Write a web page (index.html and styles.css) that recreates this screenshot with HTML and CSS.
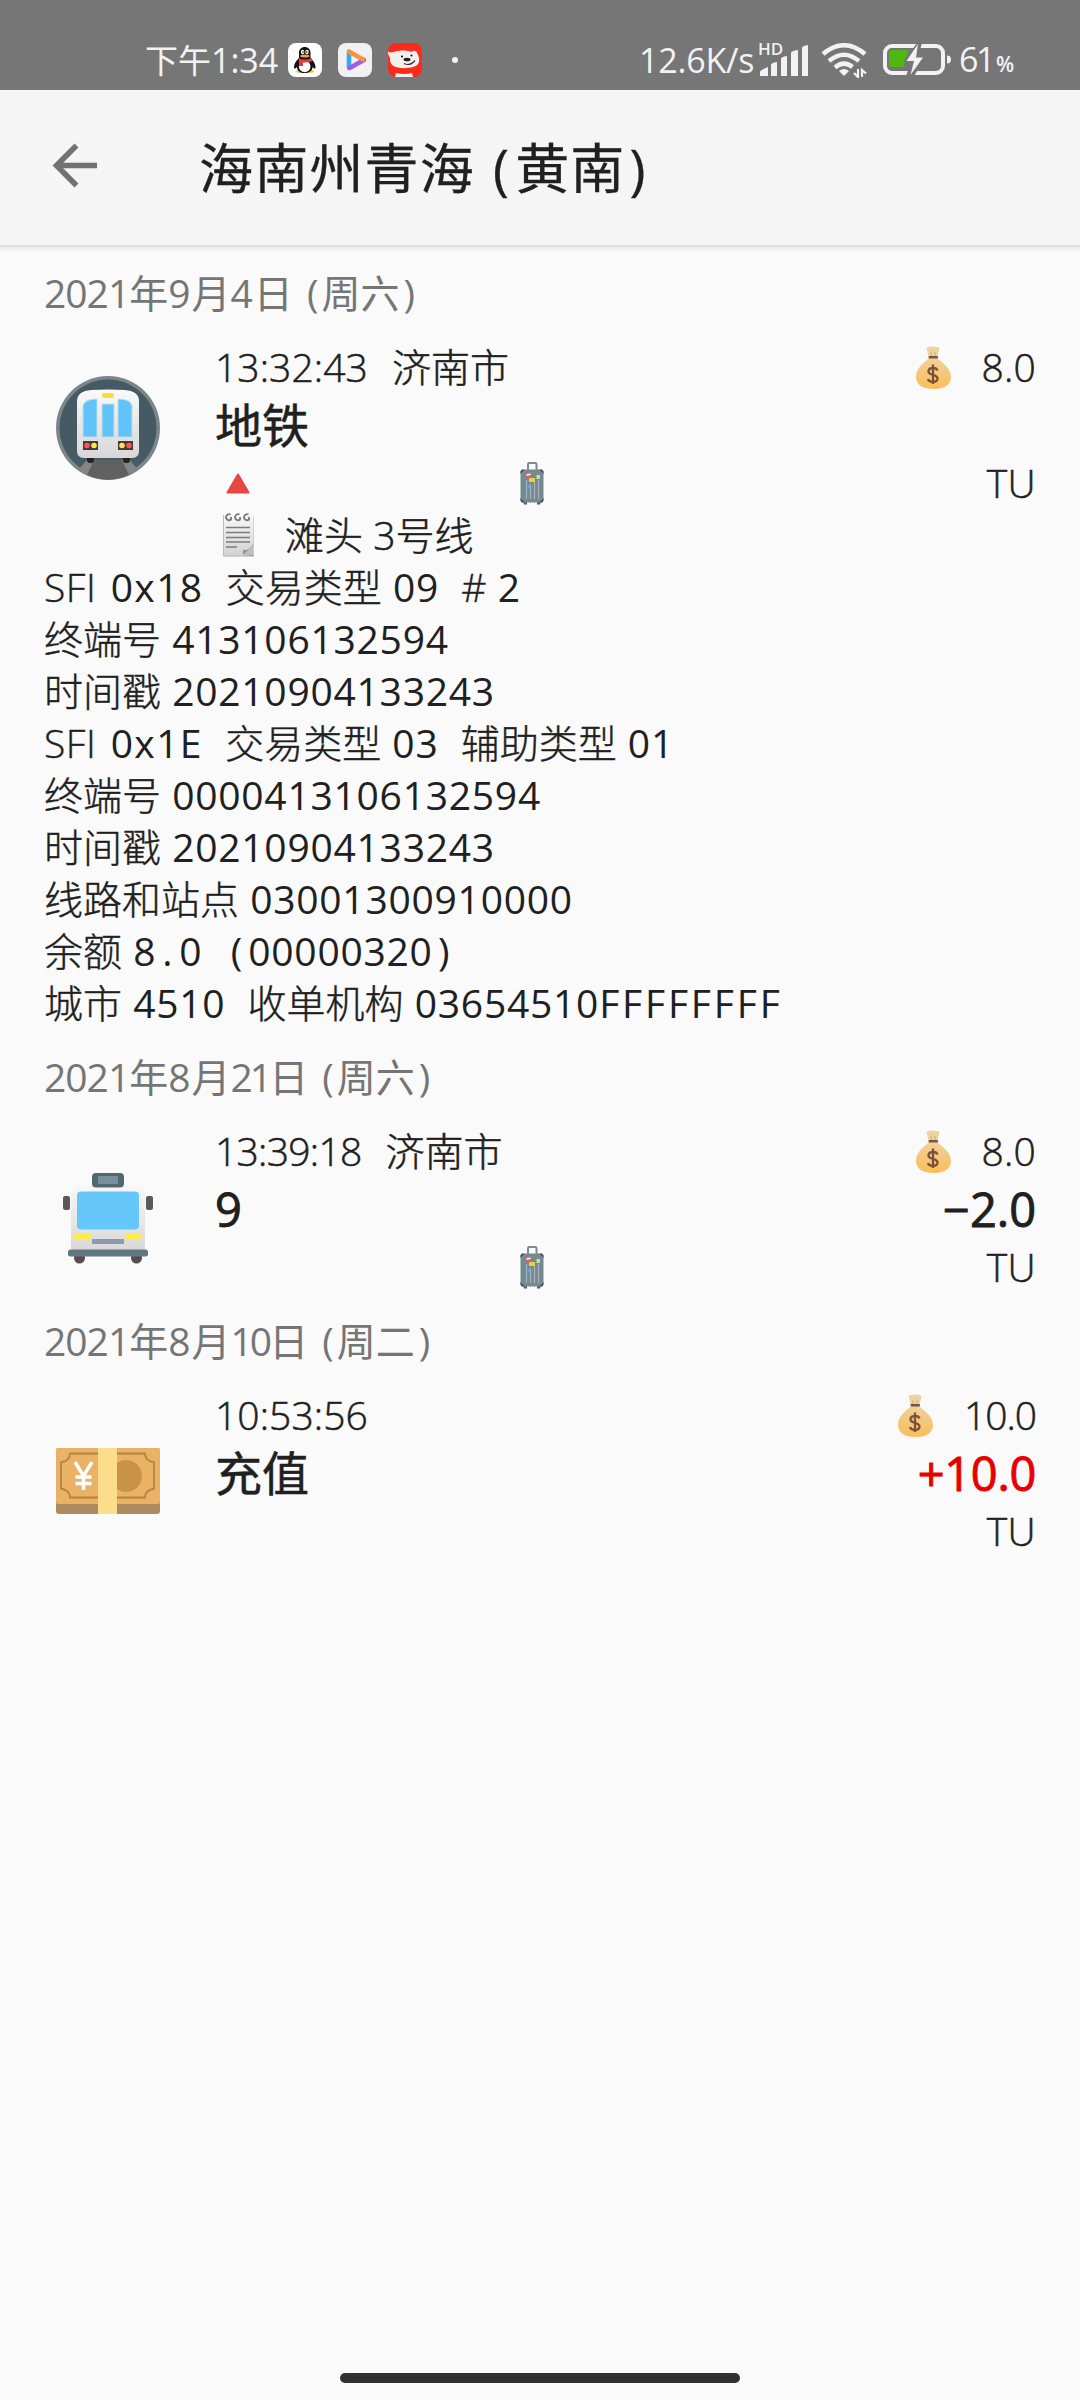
FILE: index.html
```html
<!DOCTYPE html>
<html lang="zh-CN">
<head>
<meta charset="utf-8">
<title>海南州青海 (黄南)</title>
<link rel="stylesheet" href="styles.css">
</head>
<body>
<svg class="defs" width="0" height="0" aria-hidden="true">
  <defs>
    <linearGradient id="bagFill" x1="0" y1="0" x2="0" y2="1"><stop offset="0" stop-color="#f0d09c"/><stop offset="1" stop-color="#fbbd58"/></linearGradient>
    <linearGradient id="shell" x1="0" y1="0" x2="0" y2="1"><stop offset="0" stop-color="#fafafa"/><stop offset="1" stop-color="#d8d6d8"/></linearGradient>
    <linearGradient id="paper" x1="0" y1="0" x2="0" y2="1"><stop offset="0" stop-color="#f7f7f7"/><stop offset="1" stop-color="#d2d2d2"/></linearGradient>
    <symbol id="bag" viewBox="0 0 35 43">
      <path d="M12.5 11C12 6 10 3 11 1.500Q17 -.5 23 1.500C24 4 22 7 21.500 11Z" fill="#ecd3a4"/>
      <path d="M15 6v5M19 6v5" stroke="#cfae78" stroke-width="1"/>
      <path d="M13 12C8 17 0 22 0 31c0 8 7 12 17.500 12S35 39 35 31C35 22 26 17 21.500 12Z" fill="url(#bagFill)"/>
      <rect x="12.500" y="10" width="9.500" height="2.600" rx="1" fill="#7b5545"/>
      <path d="M21.500 24.500C20.500 21 12.500 21 12.500 25.500C12.500 30 21.500 27.500 21.500 32.500C21.500 37 13 37 12 33M17 18.500V38" fill="none" stroke="#7b5139" stroke-width="2.300"/>
    </symbol>
    <symbol id="case" viewBox="0 0 24 43">
      <path d="M8 8V2.200Q8 1 9 1h6.500q1 0 1 1.200V8" fill="none" stroke="#7d8a90" stroke-width="2"/>
      <path d="M3 39h4v3.500H4zM17 39h4l-1 3.500h-3z" fill="#546067"/>
      <rect x=".5" y="7.500" width="23" height="33" rx="3" fill="#768990"/>
      <path d="M.5 12V10q0-3 4-2.500zM23.500 12V10q0-3-4-2.500zM.5 36v2q0 3 4 2.500zM23.500 36v2q0 3-4 2.500z" fill="#465157"/>
      <path d="M6.500 18v19M10.500 22v15M14.500 20v17M18.500 18v19" stroke="#a5b4ba" stroke-width="1.200"/>
      <path d="M5 12l6-1.300 1 3.500-6 1.300z" fill="#f05b66"/><path d="M6.500 13l4-.8" stroke="#fff" stroke-width="1.400"/>
      <rect x="9" y="16" width="6" height="4" fill="#f9c83c"/><rect x="16.500" y="13" width="3.500" height="4" fill="#a5efae"/>
      <path d="M5 28l4-5 1 2-4 5z" fill="#6aa3f5"/>
    </symbol>
  </defs>
</svg>

<header class="status">
  <div class="status-side">
    <span class="clock">下午<span class="clock-num">1:34</span></span>
    <svg class="app" viewBox="0 0 34 34">
      <rect width="34" height="34" rx="8" fill="#fff"/>
      <path d="M10 27l-3 2 4 1h12l4-1-3-2z" fill="#f3c84b"/>
      <path d="M11 10C11 2 22.500 2 22.500 10v5c3 3 5 6 5 9 0 3-2 1-3 0 0 4-4 6-8 6s-7.500-2-7.500-6c-1 1-3 3-3 0 0-3 2-6 5-9z" fill="#111"/>
      <ellipse cx="16.700" cy="23.500" rx="5.800" ry="5.700" fill="#fff"/>
      <ellipse cx="14.600" cy="9" rx="1.700" ry="2.200" fill="#fff"/><ellipse cx="19" cy="9" rx="1.700" ry="2.200" fill="#fff"/>
      <circle cx="15" cy="9" r=".8" fill="#111"/><circle cx="18.700" cy="9" r=".8" fill="#111"/>
      <ellipse cx="16.800" cy="13" rx="4.600" ry="1.500" fill="#f2a33a"/>
      <path d="M10.500 15q6.500 3 13 0l1 3q-5 2-9.500 1.500V23h-4v-4z" fill="#e03d45"/>
    </svg>
    <svg class="app" viewBox="0 0 34 34">
      <rect width="34" height="34" rx="8" fill="#f1f1f3"/>
      <g fill="none" stroke-width="4.600" stroke-linejoin="round" stroke-linecap="round">
        <path d="M11 10V24.500" stroke="#37a9ec"/><path d="M11.500 25L26 17" stroke="#9c5cf0"/><path d="M11 8.500L25 16.500" stroke="#f6943c"/>
      </g>
    </svg>
    <svg class="app" viewBox="0 0 34 34">
      <rect width="34" height="34" rx="8" fill="#fb2b19"/>
      <path d="M0 8.500q3 1.500 6 .5c5-2 13-2 17.500 0 2-2 5-1.500 5.500 1 3 5 4 12-4 14-5 1.500-13 1.500-17 0C3 23 1.500 18 2 15Q0 13 0 8.500z" fill="#f5efed"/>
      <path d="M8 30q8 2 16 0l1 4H7z" fill="#f5efed"/>
      <ellipse cx="19" cy="16.500" rx="3.500" ry="1.800" fill="#202020"/><circle cx="14" cy="13.500" r="1"/><circle cx="23.500" cy="12.500" r="1"/>
      <path d="M16 20.500q6 3 11-3" fill="none" stroke="#333" stroke-width="1.200"/>
    </svg>
    <i class="more"></i>
  </div>
  <div class="status-side">
    <span class="speed">12.6K/s</span>
    <span class="signal"><span class="hd">HD</span>
      <svg width="49" height="31" viewBox="0 0 49 31" fill="#f2f2f2"><path d="M0 31v-4q0-2 8-5v9z"/><path d="M11 31V20q0-2 6-3v14z"/><path d="M21 31V14q0-2 6-3v20z"/><path d="M31 31V8q0-2 7-3v26z"/><path d="M42 31V3q0-2 6-3v31z"/></svg>
    </span>
    <svg class="wifi" width="46" height="35" viewBox="0 0 46 35" fill="none" stroke="#f2f2f2">
      <path d="M2 11Q23 -6.500 44 11" stroke-width="4.500"/><path d="M8 18Q23 5.500 38 18" stroke-width="4.500"/><path d="M14 24.500Q23 17 31.500 24" stroke-width="4.500"/>
      <path d="M18 28q5-4 10 0l-5 5z" fill="#f2f2f2" stroke="none"/>
      <path d="M37 26v8l-4-4M41 34v-7l4 3.500" stroke-width="2.200"/>
    </svg>
    <svg class="battery" width="69" height="32" viewBox="0 0 69 32">
      <rect x="2" y="2" width="58" height="27" rx="7" fill="none" stroke="#f2f2f2" stroke-width="4"/>
      <path d="M8 6h17l-2 9-3 8H8q-2 0-2-2V8q0-2 2-2z" fill="#4fb810"/>
      <path d="M34-1L20 18h8l-5 14h8L43 13h-8l4-14z" fill="#767676"/>
      <path d="M35 0L23.500 17H31l-3.500 14L40 13.500h-7z" fill="#f2f2f2"/>
      <path d="M64 11.500q4 0 4 4t-4 4z" fill="#f2f2f2"/>
    </svg>
    <span class="percent">61<small>%</small></span>
  </div>
</header>

<nav class="bar">
  <svg class="back" width="46" height="46" viewBox="0 0 46 46" fill="none" stroke="#727272" stroke-width="5.600"><path d="M45 22.500H5M24.500 2.500L4.500 22.500L24.500 42.500"/></svg>
  <h1>海南州青海<span class="open">(</span>黄南<span class="close">)</span></h1>
</nav>

<main>
  <h2><b>2021</b>年<b class="digit">9</b>月<b class="digit">4</b>日 <i>(</i>周六<i>)</i></h2>
  <section class="trip">
    <div class="icon">
      <svg class="metro" viewBox="0 0 104 104">
        <circle cx="52" cy="52" r="52" fill="#7b858a"/><circle cx="52" cy="52" r="48.500" fill="#455a64"/>
        <path d="M31 84h43l8 10a52 52 0 0 1-60 0z" fill="#858585"/><path d="M38 84h28l7 15a52 52 0 0 1-42 0z" fill="#616161"/>
        <rect x="31" y="79" width="7" height="8" rx="3" fill="#222"/><rect x="67" y="79" width="7" height="8" rx="3" fill="#222"/>
        <path d="M21 24q1-9 14-10 17-1 34 0 13 1 14 10v51q0 7-7 7H28q-7 0-7-7z" fill="url(#shell)"/>
        <path d="M27 61V30q1-7 14-7v38zM46 28h12v33H46zM62 23q13 0 14 7v31H62z" fill="#60c3fa" stroke="#c8dbe2" stroke-width="1"/>
        <rect x="46" y="17" width="12" height="5" rx="2" fill="#f8dc45"/>
        <path d="M27 65h15v9H27zM62 65h15v9H62z" fill="#403b3b"/>
        <g fill="#ff5252"><circle cx="31" cy="69.500" r="2.800"/><circle cx="73" cy="69.500" r="2.800"/></g><g fill="#ffe34d"><circle cx="38" cy="69.500" r="2.800"/><circle cx="66" cy="69.500" r="2.800"/></g>
      </svg>
    </div>
    <div class="body">
      <div class="line"><span><span class="time">13:32:43</span>济南市</span><span class="balance"><svg class="bag"><use href="#bag"/></svg>8.0</span></div>
      <div class="line title"><span>地铁</span></div>
      <div class="line route">
        <svg class="up" viewBox="0 0 24 21"><path d="M12 1.500L22.500 19.500H1.500z" fill="#e84744" stroke="#e84744" stroke-width="2" stroke-linejoin="round"/></svg>
        <svg class="case"><use href="#case"/></svg><span>TU</span></div>
      <div class="line note">
        <svg viewBox="0 0 31 44"><path d="M0 2h31v41.500H0z" fill="url(#paper)"/><path d="M.5 2v41H31V3" fill="none" stroke="#bcbcbc"/>
          <path d="M3 14.500h24M3 19.500h24M3 24.500h24M3 29h24M3 34h11" stroke="#7c7c7c" stroke-width="1.600"/>
          <path d="M20 42V37q6 1 10-6v12z" fill="#929292"/><path d="M20 42L30 32v10z" fill="#bdbdbd"/>
          <g fill="none" stroke="#777" stroke-width="1.800"><path d="M7.500 1.500A3 3 0 1 0 8 6.500L8 4M16.500 1.500A3 3 0 1 0 17 6.500L17 4M25.500 1.500A3 3 0 1 0 26 6.500L26 4"/></g></svg>
        <span>滩头 3号线</span></div>
    </div>
  </section>
  <div class="details">
    <p><span>SFI</span> <b>0x18</b>  交易类型 <b>09</b>  # <b>2</b></p>
    <p>终端号 <b>413106132594</b></p>
    <p>时间戳 <b>20210904133243</b></p>
    <p><span>SFI</span> <b>0x1E</b>  交易类型 <b>03</b>  辅助类型 <b>01</b></p>
    <p>终端号 <b>0000413106132594</b></p>
    <p>时间戳 <b>20210904133243</b></p>
    <p>线路和站点 <b>03001300910000</b></p>
    <p>余额 <b>8<i>.</i>0<i> </i><i>(</i>00000320<i>)</i></b></p>
    <p>城市 <b>4510</b>  收单机构 <b>03654510<em>FFFFFFFF</em></b></p>
  </div>

  <h2><b>2021</b>年<b class="digit">8</b>月<b class="pair">21</b>日 <i>(</i>周六<i>)</i></h2>
  <section class="trip">
    <div class="icon">
      <svg class="bus" viewBox="0 0 90 91">
        <circle cx="16.500" cy="85" r="5.500" fill="#5b4a4e"/><circle cx="73.500" cy="85" r="5.500" fill="#5b4a4e"/>
        <path d="M8 15q1-4 7-5 30-4 60 0 6 1 7 5v65H8z" fill="url(#shell)"/>
        <rect x="29" width="32" height="14.500" rx="4" fill="#536771"/><rect x="35" y="3" width="20" height="8" fill="#7a919d"/>
        <rect x="0" y="23" width="7" height="14" rx="2" fill="#5c5859"/><rect x="83" y="23" width="7" height="14" rx="2" fill="#5c5859"/>
        <rect x="14" y="18.500" width="62" height="38" rx="4" fill="#66c7fb"/>
        <rect x="11" y="60" width="17" height="7" rx="2" fill="#fdec4b"/><rect x="62" y="60" width="17" height="7" rx="2" fill="#fdec4b"/>
        <rect x="29" y="66" width="32" height="5" fill="#8c9baa"/>
        <rect x="5" y="76.500" width="80" height="7" rx="2.500" fill="#607681"/>
      </svg>
    </div>
    <div class="body">
      <div class="line"><span><span class="time narrow">13:39:18</span>济南市</span><span class="balance"><svg class="bag"><use href="#bag"/></svg>8.0</span></div>
      <div class="line title"><span class="amount">9</span><span class="amount">−2.0</span></div>
      <div class="line route"><svg class="case"><use href="#case"/></svg><span>TU</span></div>
    </div>
  </section>

  <h2><b>2021</b>年<b class="digit">8</b>月<b class="pair">10</b>日 <i>(</i>周二<i>)</i></h2>
  <section class="trip">
    <div class="icon">
      <svg class="cash" viewBox="0 0 104 66">
        <rect width="104" height="66" rx="3" fill="#ae8b5e"/><rect width="104" height="56" rx="2" fill="#e9b264"/>
        <path d="M14 5.500h75q0 7 9 9v26q-9 2-9 9H14q0-7-9-9v-26q9-2 9-9z" fill="none" stroke="#b58343" stroke-width="1.800"/>
        <circle cx="70" cy="28" r="16" fill="#c89247"/>
        <rect x="42" width="19" height="66" fill="#fbdd8b"/>
        <path d="M19 14l8.500 14L36 14M27.500 28v14M19.500 29h16M19.500 35.500h16" fill="none" stroke="#fff" stroke-width="3.500"/>
      </svg>
    </div>
    <div class="body">
      <div class="line"><span class="time">10:53:56</span><span class="balance tight"><svg class="bag"><use href="#bag"/></svg>10.0</span></div>
      <div class="line title"><span>充值</span><span class="amount credit">+10.0</span></div>
      <div class="line route"><span>TU</span></div>
    </div>
  </section>
</main>
<div class="home"></div>
</body>
</html>
```
FILE: styles.css
```css
* { box-sizing: border-box; margin: 0; padding: 0; }
body {
  display: flex;
  flex-direction: column;
  width: 1080px;
  height: 2400px;
  background: #fafafa;
  color: #202020;
  font-family: "Open Sans", "Noto Sans CJK SC", sans-serif;
  font-size: 39px;
  font-weight: 300;
}
svg { flex: none; }
.defs { position: absolute; }

.status {
  display: flex;
  flex: none;
  justify-content: space-between;
  height: 90px;
  padding: 30px 69px 0 145px;
  background: #767676;
  color: #f2f2f2;
  font-size: 34px;
  font-weight: 400;
  line-height: 60px;
}
.status-side { display: flex; align-items: center; height: 60px; }
.status-side > * { flex: none; }
.clock { width: 143px; font-size: 33px; white-space: nowrap; }
.clock-num { font-size: 34px; }
.app { width: 34px; height: 34px; margin-right: 16px; }
.more { width: 6px; height: 6px; margin-left: 14px; border-radius: 50%; background: #f2f2f2; }
.speed { width: 121px; letter-spacing: -.2px; }
.signal { position: relative; width: 49px; height: 31px; margin-right: 12px; }
.signal svg { display: block; }
.hd { position: absolute; left: -2px; top: -5px; font-size: 17px; font-weight: 600; line-height: 17px; }
.wifi { margin-right: 16px; }
.battery { margin-right: 7px; }
.percent { width: 52px; padding-top: 3px; white-space: nowrap; letter-spacing: -2.500px; }
.percent small { margin-left: 3px; font-size: 21px; font-weight: 600; }

.bar {
  display: flex;
  flex: none;
  align-items: center;
  height: 155px;
  padding-left: 52px;
  background: #f5f5f5;
  box-shadow: 0 2px 0 #dfdfdf, 0 5px 3px #ebebeb;
}
.back { margin: -4px 101px 0 0; }
h1 { font-size: 54px; font-weight: 400; letter-spacing: 1.2px; line-height: 80px; -webkit-text-stroke: .3px; }
.open { margin: 0 5px 0 18px; }
.close { margin-left: 4px; }

main { flex: 1; }
h2 {
  padding-left: 44px;
  color: #757575;
  font-size: 39px;
  font-weight: 400;
  line-height: 96px;
}
h2 b { font-weight: 400; letter-spacing: -1px; }
h2 .digit { letter-spacing: 1px; }
h2 .pair { letter-spacing: -3px; }
h2 i { margin: 0 3px 0 4px; font-style: normal; }

.trip { display: flex; padding: 0 44px 0 45px; }
.icon { display: flex; align-items: center; width: 170px; height: 168px; padding-left: 11px; }
.metro { width: 104px; height: 104px; margin-top: 6px; }
.bus { width: 90px; height: 91px; margin: 19px 0 0 7px; }
.cash { width: 104px; height: 66px; margin-top: 16px; }
.body { flex: 1; }
.line {
  display: flex;
  justify-content: space-between;
  align-items: center;
  height: 52px;
  line-height: 52px;
  white-space: nowrap;
  -webkit-text-stroke: .5px;
}
.time { margin-right: 24px; letter-spacing: .1px; }
.narrow { letter-spacing: -.7px; }
.balance { display: flex; align-items: center; letter-spacing: .2px; }
.bag { width: 35px; height: 43px; margin-right: 31px; }
.tight { letter-spacing: -1px; }
.title { height: 64px; font-size: 47px; font-weight: 400; line-height: 64px; }
.amount { -webkit-text-stroke: .9px; }
.credit { color: #e60000; letter-spacing: -.3px; }
.route { display: grid; grid-template-columns: 305px 24px 1fr; }
.up { width: 24px; height: 21px; margin-left: 11px; }
.case { grid-column: 2; width: 24px; height: 43px; }
.route span { grid-column: 3; justify-self: end; letter-spacing: .4px; }
.note { justify-content: flex-start; }
.note svg { width: 31px; height: 44px; margin: 0 31px 0 8px; }

.details { padding-left: 44px; }
.details p { height: 52px; line-height: 52px; white-space: pre; word-spacing: 1px; -webkit-text-stroke: .4px; }
.details span { margin-right: 3px; letter-spacing: .6px; }
.details b { font-weight: 400; letter-spacing: .75px; word-spacing: 0; -webkit-text-stroke: 0; }
.details span + b { letter-spacing: 1.400px; }
.details i { display: inline-block; width: 23px; font-style: normal; text-align: center; }
.details em { font-style: normal; letter-spacing: 2.800px; }

.home { flex: none; width: 400px; height: 10px; margin: 0 auto 17px; border-radius: 5px; background: #303030; }
```
